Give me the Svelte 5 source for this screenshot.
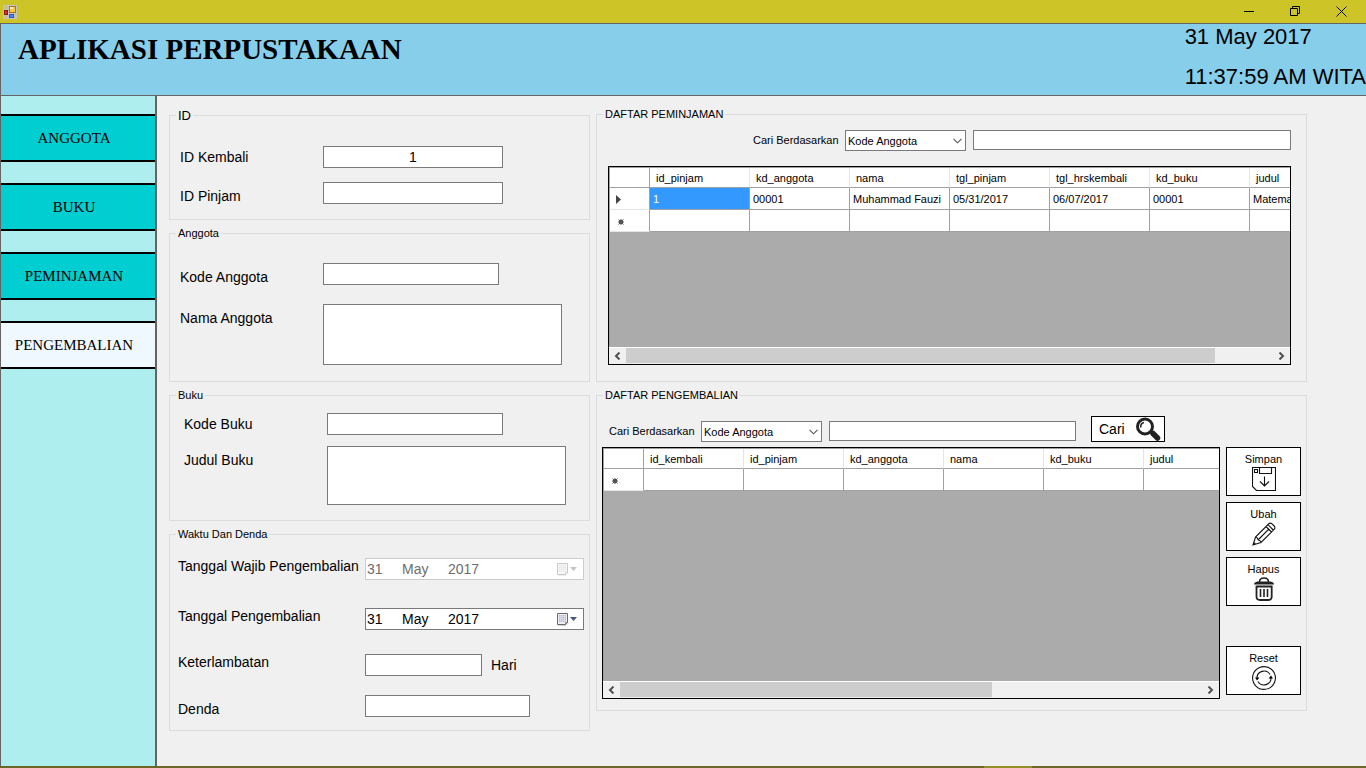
<script lang="ts">
	type Grid = {
		columns: string[];
		rows: string[][];
		thumb: number; // share of the scroll track, in percent
	};

	const menu = ['ANGGOTA', 'BUKU', 'PEMINJAMAN', 'PENGEMBALIAN'];
	const searchFields = ['Kode Anggota', 'Nama', 'Kode Buku'];

	const peminjaman: Grid = {
		columns: ['id_pinjam', 'kd_anggota', 'nama', 'tgl_pinjam', 'tgl_hrskembali', 'kd_buku', 'judul'],
		rows: [['1', '00001', 'Muhammad Fauzi', '05/31/2017', '06/07/2017', '00001', 'Matematika']],
		thumb: 91
	};

	const pengembalian: Grid = {
		columns: ['id_kembali', 'id_pinjam', 'kd_anggota', 'nama', 'kd_buku', 'judul'],
		rows: [],
		thumb: 64
	};

	let active = $state('PENGEMBALIAN');
	let idKembali = $state('1');
	let wajibKembali = $state('31     May     2017');
	let tglKembali = $state('31     May     2017');
	let cariPinjam = $state('Kode Anggota');
	let cariKembali = $state('Kode Anggota');
</script>

{#snippet combo(id: string, value: string, onpick: (v: string) => void)}
	<div class="combo">
		<select {id} {value} onchange={(e) => onpick(e.currentTarget.value)}>
			{#each searchFields as field}
				<option>{field}</option>
			{/each}
		</select>
		<svg class="chevron" width="9" height="6" viewBox="0 0 9 6" aria-hidden="true">
			<path d="M.5.8l4 4 4-4" fill="none" stroke="#555" stroke-width="1.1" />
		</svg>
	</div>
{/snippet}

{#snippet calendar()}
	<svg width="21" height="13" viewBox="0 0 21 13" aria-hidden="true">
		<path d="M.5.5h10v9l-2 2h-8z" fill="#eef0f6" stroke="#6c6469" />
		<path d="M2 2h7v7H2z" fill="#b4bbcf" />
		<path d="M2 3.500h7M2 5.500h7M2 7.500h7M3.500 2v7M5.500 2v7M7.500 2v7" stroke="#e6e9f2" stroke-width=".6" />
		<path d="M8.500 11.500v-2h2z" fill="#fff" stroke="#6c6469" stroke-width=".7" />
		<path d="M1 12.500h8l2.500-2.500" fill="none" stroke="#c9c4c4" stroke-width=".8" />
		<path d="M13 4h7l-3.500 4z" fill="#46587f" />
	</svg>
{/snippet}

{#snippet dataGrid(grid: Grid, caption: string)}
	<div class="data-grid">
		<div class="viewport">
			<table aria-label={caption}>
				<thead>
					<tr>
						<th class="marker"></th>
						{#each grid.columns as column}
							<th scope="col">{column}</th>
						{/each}
					</tr>
				</thead>
				<tbody>
					{#each grid.rows as row, r}
						<tr>
							<td class="marker">
								<svg width="16" height="12" viewBox="0 0 16 12" aria-hidden="true">
									<path d="M3 2l5 4.500-5 4.500z" fill="#444" />
								</svg>
							</td>
							{#each row as cell, c}
								<td class:selected={r === 0 && c === 0}>{cell}</td>
							{/each}
						</tr>
					{/each}
					<tr>
						<td class="marker">
							<svg width="16" height="12" viewBox="0 0 16 12" aria-hidden="true">
								<circle cx="8" cy="7" r="2" fill="#333" />
								<path d="M8 4v6M5 7h6M5.500 4.500l5 5M10.500 4.500l-5 5" stroke="#555" />
							</svg>
						</td>
						{#each grid.columns as _}
							<td></td>
						{/each}
					</tr>
				</tbody>
			</table>
		</div>
		<div class="scrollbar">
			<button type="button" aria-label="Scroll left">
				<svg width="7" height="8" viewBox="0 0 7 8"><path d="M5.500.5L2 4l3.500 3.500" /></svg>
			</button>
			<div class="track"><div class="thumb" style="width: {grid.thumb}%"></div></div>
			<button type="button" aria-label="Scroll right">
				<svg width="7" height="8" viewBox="0 0 7 8"><path d="M1.500.5L5 4 1.500 7.500" /></svg>
			</button>
		</div>
	</div>
{/snippet}

<div class="window">
	<div class="titlebar">
		<svg class="app-icon" width="14" height="14" viewBox="0 0 14 14" aria-hidden="true">
			<rect x=".5" y=".5" width="13" height="13" fill="#c9c27a" stroke="#c3c3c9" />
			<path d="M5.500 0v14M0 4.500h6M0 11h14M5 8.500h9" stroke="#c3c3c9" />
			<rect x="6.500" y="1.500" width="6" height="6" fill="#fbc93a" stroke="#a8731a" />
			<rect x="7" y="2" width="3" height="2" fill="#fff0b0" />
			<rect x="1.500" y="5.500" width="3" height="4" fill="#d8352a" stroke="#8f1512" />
			<rect x="6.500" y="9.500" width="4" height="3" fill="#4d8df0" stroke="#2b59b5" />
		</svg>
		<div class="window-buttons">
			<button type="button" aria-label="Minimize">
				<svg width="11" height="11" viewBox="0 0 11 11"><path d="M0 5.500h10" /></svg>
			</button>
			<button type="button" aria-label="Restore">
				<svg width="11" height="11" viewBox="0 0 11 11">
					<path d="M.5 2.500h7v7h-7zM2.500 2.500v-2h7v7h-2" />
				</svg>
			</button>
			<button type="button" aria-label="Close">
				<svg width="11" height="11" viewBox="0 0 11 11"><path d="M.5.5l10 10M10.500.5l-10 10" /></svg>
			</button>
		</div>
	</div>

	<header>
		<h1>APLIKASI PERPUSTAKAAN</h1>
		<div class="clock">
			<time>31 May 2017</time>
			<time>11:37:59 AM WITA</time>
		</div>
	</header>

	<div class="body">
		<nav>
			{#each menu as item}
				<button type="button" class:active={item === active} onclick={() => (active = item)}>{item}</button>
			{/each}
		</nav>

		<main>
			<form class="column">
				<fieldset>
					<legend class="large">ID</legend>
					<div class="fields id">
						<label for="id-kembali">ID Kembali</label>
						<input id="id-kembali" class="wide centered" bind:value={idKembali} />
						<label for="id-pinjam" class="low">ID Pinjam</label>
						<input id="id-pinjam" class="wide" />
					</div>
				</fieldset>

				<fieldset>
					<legend>Anggota</legend>
					<div class="fields anggota">
						<label for="kode-anggota" class="low">Kode Anggota</label>
						<input id="kode-anggota" class="code" />
						<label for="nama-anggota" class="low">Nama Anggota</label>
						<textarea id="nama-anggota"></textarea>
					</div>
				</fieldset>

				<fieldset>
					<legend>Buku</legend>
					<div class="fields buku">
						<label for="kode-buku">Kode Buku</label>
						<input id="kode-buku" class="code" />
						<label for="judul-buku" class="low">Judul Buku</label>
						<textarea id="judul-buku"></textarea>
					</div>
				</fieldset>

				<fieldset>
					<legend>Waktu Dan Denda</legend>
					<div class="fields waktu">
						<label for="tgl-wajib" class="high">Tanggal Wajib Pengembalian</label>
						<div class="date disabled">
							<input id="tgl-wajib" bind:value={wajibKembali} disabled />
							<button type="button" aria-label="Pilih tanggal" disabled>{@render calendar()}</button>
						</div>
						<label for="tgl-kembali" class="high">Tanggal Pengembalian</label>
						<div class="date">
							<input id="tgl-kembali" bind:value={tglKembali} />
							<button type="button" aria-label="Pilih tanggal">{@render calendar()}</button>
						</div>
						<label for="terlambat" class="high">Keterlambatan</label>
						<div class="days">
							<input id="terlambat" />
							<span>Hari</span>
						</div>
						<label for="denda" class="low">Denda</label>
						<input id="denda" class="fine" />
					</div>
				</fieldset>
			</form>

			<div class="column lists">
				<fieldset>
					<legend>DAFTAR PEMINJAMAN</legend>
					<div class="panel pinjam">
						<div class="search">
							<label for="cari-pinjam">Cari Berdasarkan</label>
							{@render combo('cari-pinjam', cariPinjam, (v) => (cariPinjam = v))}
							<input aria-label="Kata kunci peminjaman" />
						</div>
						{@render dataGrid(peminjaman, 'Daftar peminjaman')}
					</div>
				</fieldset>

				<fieldset>
					<legend>DAFTAR PENGEMBALIAN</legend>
					<div class="panel kembali">
						<div class="search">
							<label for="cari-kembali">Cari Berdasarkan</label>
							{@render combo('cari-kembali', cariKembali, (v) => (cariKembali = v))}
							<input aria-label="Kata kunci pengembalian" />
							<button type="button" class="find">
								Cari
								<svg width="26" height="24" viewBox="0 0 26 24" aria-hidden="true">
									<path d="M15 14l3.500 3" stroke="#222" stroke-width="3" />
									<path d="M18 16.500l4.500 4.500" stroke="#222" stroke-width="5.500" stroke-linecap="round" />
									<circle cx="10" cy="9.500" r="7.500" fill="#fff" stroke="#222" stroke-width="3" />
									<path d="M5.800 10.500a4.500 4.500 0 0 1 3.200-5" fill="none" stroke="#222" stroke-width="1.500" />
								</svg>
							</button>
						</div>
						<div class="with-actions">
							{@render dataGrid(pengembalian, 'Daftar pengembalian')}
							<div class="actions">
								<button type="button">
									Simpan
									<svg width="24" height="24" viewBox="0 0 24 24" aria-hidden="true">
										<path d="M.5.5h23v23H4.500l-4-4z" />
										<path d="M2.500 2.500h3v3h-3zM7.500.5v6h12v-6M12.500 9.500v9M8 14.500l4.500 4.500 4.500-4.500" />
									</svg>
								</button>
								<button type="button">
									Ubah
									<svg width="24" height="24" viewBox="0 0 24 24" aria-hidden="true">
										<path d="M1 23l2.500-8L17 1.500q1.500-1 3 .3l2.200 2.200q1.300 1.500.3 3L9 20.500zM3.500 15q1.500 0 2 1.500.3 1.800 2 2 1.500.5 1.500 2M14 4.500l5.500 5.500M16 2.700l5.300 5.300M6.500 17.500L16.500 7.300M1.800 20.500l1.700 1.700" />
									</svg>
								</button>
								<button type="button">
									Hapus
									<svg width="24" height="24" viewBox="0 0 24 24" aria-hidden="true">
										<path d="M2 7.500q0-2.500 3.500-3h13q3.500.5 3.500 3z" fill="#222" stroke="none" />
										<path d="M7.500 5q0-4 4.500-4t4.500 4" stroke="#222" stroke-width="1.600" />
										<path d="M4.500 9.500h15.200v10q0 3.500-3.500 3.500H8q-3.500 0-3.500-3.500z" stroke="#222" stroke-width="1.800" />
										<path d="M8.500 12v8M12 12v8M15.500 12v8" stroke="#222" stroke-width="1.600" />
									</svg>
								</button>
								<button type="button" class="reset">
									Reset
									<svg width="24" height="24" viewBox="0 0 24 24" aria-hidden="true">
										<circle cx="12" cy="12" r="11.400" />
										<path d="M5 12.500a7 7 0 0 1 13-4M19 11.500a7 7 0 0 1-13 4" />
										<path d="M3 11.500h4.500L5 14.500zM16.500 12.500h4.500L19 9.500z" fill="#000" stroke="none" />
									</svg>
								</button>
							</div>
						</div>
					</div>
				</fieldset>
			</div>
		</main>
	</div>
	<div class="taskbar"><span></span></div>
</div>

<style>
	:global(body) {
		margin: 0;
	}

	.window {
		background: #f0f0f0;
		box-sizing: border-box;
		color: #000;
		display: flex;
		flex-direction: column;
		font-family: 'Liberation Sans', Arial, sans-serif;
		font-size: 11px;
		min-height: 100vh;
		overflow: hidden;
	}

	input,
	textarea,
	select,
	button {
		background: #fff;
		border: 1px solid #7a7a7a;
		border-radius: 0;
		box-sizing: border-box;
		color: inherit;
		font: inherit;
		margin: 0;
		padding: 0;
	}

	/* title bar */
	.titlebar {
		align-items: center;
		background: #cdc528;
		border-bottom: 1px solid #646464;
		display: flex;
		height: 23px;
		justify-content: space-between;
		padding-left: 3px;
	}

	.window-buttons {
		display: flex;
		margin-right: 2px;
	}

	.window-buttons button {
		align-items: center;
		background: none;
		border: 0;
		display: flex;
		height: 20px;
		justify-content: center;
		width: 46px;
	}

	.window-buttons svg {
		fill: none;
		stroke: #000;
	}

	/* header */
	header {
		background: #87ceeb;
		border-bottom: 1px solid #646464;
		border-left: 1px solid #646464;
		display: flex;
		height: 71px;
		justify-content: space-between;
	}

	h1 {
		font-family: 'Liberation Serif', 'Times New Roman', serif;
		font-size: 29px;
		font-weight: bold;
		line-height: 32px;
		margin: 0;
		padding: 9px 0 0 17px;
	}

	.clock {
		display: flex;
		flex-direction: column;
		font-size: 22px;
		gap: 14px;
		line-height: 26px;
		white-space: nowrap;
	}

	/* sidebar */
	.body {
		border-left: 1px solid #646464;
		display: flex;
		flex: 1;
	}

	nav {
		background: #afeeee;
		border-right: 2px solid #646464;
		display: flex;
		flex-direction: column;
		flex-shrink: 0;
		gap: 21px;
		padding-top: 18px;
		width: 154px;
	}

	nav button {
		background: #00ced1;
		border: solid #000;
		border-width: 2px 0;
		font-family: 'Liberation Serif', 'Times New Roman', serif;
		font-size: 15px;
		height: 48px;
		padding-right: 8px;
	}

	nav button.active {
		background: #f0f8ff;
	}

	/* group boxes */
	main {
		align-items: flex-start;
		display: flex;
		flex: 1;
		gap: 6px;
		min-width: 0;
		padding: 12px 59px 35px 12px;
	}

	.column {
		display: flex;
		flex-direction: column;
		flex-shrink: 0;
		gap: 7px;
		width: 421px;
	}

	.column.lists {
		flex: 1;
		min-width: 0;
		width: auto;
	}

	fieldset {
		border: 1px solid #dcdcdc;
		margin: 0;
		min-width: 0;
		padding: 0;
	}

	legend {
		line-height: 13px;
		margin-left: 6px;
		padding: 0 2px;
	}

	legend.large {
		font-size: 13px;
		line-height: 15px;
	}

	.fields {
		align-items: start;
		display: grid;
		font-size: 14px;
		grid-template-columns: 143px 1fr;
		line-height: 16px;
	}

	.fields.id {
		grid-template-rows: 36px 22px;
		padding: 23px 0 15px 10px;
	}

	.fields.anggota {
		grid-template-rows: 41px 61px;
		padding: 23px 0 16px 10px;
	}

	.fields.buku {
		grid-template-rows: 33px 59px;
		padding: 11px 0 15px 14px;
	}

	.fields.waktu {
		grid-template-columns: 187px 1fr;
		grid-template-rows: 50px 46px 41px 22px;
		padding: 17px 0 13px 8px;
	}

	.fields label {
		padding-top: 3px;
		white-space: nowrap;
	}

	.fields label.low {
		padding-top: 6px;
	}

	.fields label.high {
		padding-top: 0;
	}

	.fields input {
		height: 22px;
	}

	.fields .wide {
		width: 180px;
	}

	.fields .code {
		width: 176px;
	}

	.fields .centered {
		text-align: center;
	}

	.fields .fine {
		width: 165px;
	}

	textarea {
		display: block;
		height: 100%;
		resize: none;
		width: 239px;
	}

	.date {
		background: #fff;
		border: 1px solid #7a7a7a;
		box-sizing: border-box;
		display: flex;
		height: 22px;
		width: 219px;
	}

	.date input {
		background: none;
		border: 0;
		flex: 1;
		height: 20px;
		min-width: 0;
		padding-left: 1px;
	}

	.date button {
		align-items: center;
		background: none;
		border: 0;
		display: flex;
		padding-right: 5px;
	}

	.date.disabled {
		border-color: #ccc;
		color: #6d6d6d;
	}

	.date.disabled svg {
		filter: grayscale(1);
		opacity: 0.35;
	}

	.days {
		align-items: center;
		display: flex;
		gap: 9px;
	}

	.days input {
		width: 117px;
	}

	/* lists */
	.panel.pinjam {
		padding: 9px 15px 16px 11px;
	}

	.panel.kembali {
		padding: 14px 5px 11px 5px;
	}

	.search {
		align-items: flex-end;
		display: flex;
	}

	.pinjam .search {
		margin-bottom: 15px;
		padding-left: 145px;
	}

	.kembali .search {
		margin-bottom: 5px;
		padding: 0 136px 0 7px;
	}

	.search label {
		line-height: 21px;
		white-space: nowrap;
		width: 92px;
	}

	.search input {
		flex: 1;
		height: 20px;
		margin: 0 0 1px 7px;
		min-width: 0;
	}

	.combo {
		position: relative;
	}

	.combo select {
		appearance: none;
		display: block;
		height: 21px;
		padding-left: 2px;
		width: 121px;
	}

	.chevron {
		pointer-events: none;
		position: absolute;
		right: 4px;
		top: 8px;
	}

	button.find {
		border-color: #000;
		display: flex;
		font-size: 14px;
		height: 26px;
		justify-content: space-between;
		line-height: 24px;
		margin-left: 15px;
		padding: 0 3px 0 7px;
		width: 74px;
	}

	.data-grid {
		background: #ababab;
		border: 1px solid #000;
		box-sizing: border-box;
		display: flex;
		flex: 1;
		flex-direction: column;
		height: 199px;
		min-width: 0;
	}

	.kembali .data-grid {
		height: 252px;
	}

	.viewport {
		border-left: 1px solid #a0a0a0;
		border-top: 1px solid #a0a0a0;
		flex: 1;
		overflow: hidden;
	}

	table {
		border-collapse: separate;
		border-spacing: 0;
		table-layout: fixed;
		width: 0;
	}

	th,
	td {
		background: #fff;
		border: solid #a0a0a0;
		border-width: 0 1px 1px 0;
		box-sizing: border-box;
		font-weight: normal;
		height: 22px;
		overflow: hidden;
		padding: 0 0 0 3px;
		text-align: left;
		white-space: nowrap;
		width: 100px;
	}

	th {
		border-right-color: #e5e5e5;
		height: 20px;
		padding-left: 6px;
	}

	.marker {
		padding-left: 3px;
		width: 40px;
	}

	.marker svg {
		display: block;
	}

	th.marker {
		border-right-color: #a0a0a0;
	}

	td.marker {
		border-bottom-color: #e5e5e5;
	}

	td.selected {
		background: #3399ff;
		color: #fff;
	}

	.scrollbar {
		background: #f0f0f0;
		border-top: 1px solid #fff;
		box-sizing: border-box;
		display: flex;
		height: 17px;
	}

	.scrollbar button {
		align-items: center;
		background: none;
		border: 0;
		display: flex;
		justify-content: center;
		width: 17px;
	}

	.scrollbar path {
		fill: none;
		stroke: #505050;
		stroke-width: 2;
	}

	.track {
		flex: 1;
	}

	.thumb {
		background: #cdcdcd;
		height: 15px;
	}

	/* action buttons */
	.with-actions {
		display: flex;
		gap: 6px;
	}

	.actions {
		display: flex;
		flex-direction: column;
		gap: 6px;
	}

	.actions button {
		align-items: center;
		border-color: #000;
		display: flex;
		flex-direction: column;
		gap: 1px;
		height: 49px;
		line-height: 14px;
		padding-top: 4px;
		width: 75px;
	}

	.actions button.reset {
		margin-top: 34px;
	}

	.actions svg {
		fill: none;
		stroke: #111;
		stroke-width: 1.1;
	}

	.taskbar {
		background: #6b6728;
		display: flex;
		height: 2px;
		padding-left: 72%;
	}

	.taskbar span {
		background: #938f28;
		width: 48px;
	}
</style>
